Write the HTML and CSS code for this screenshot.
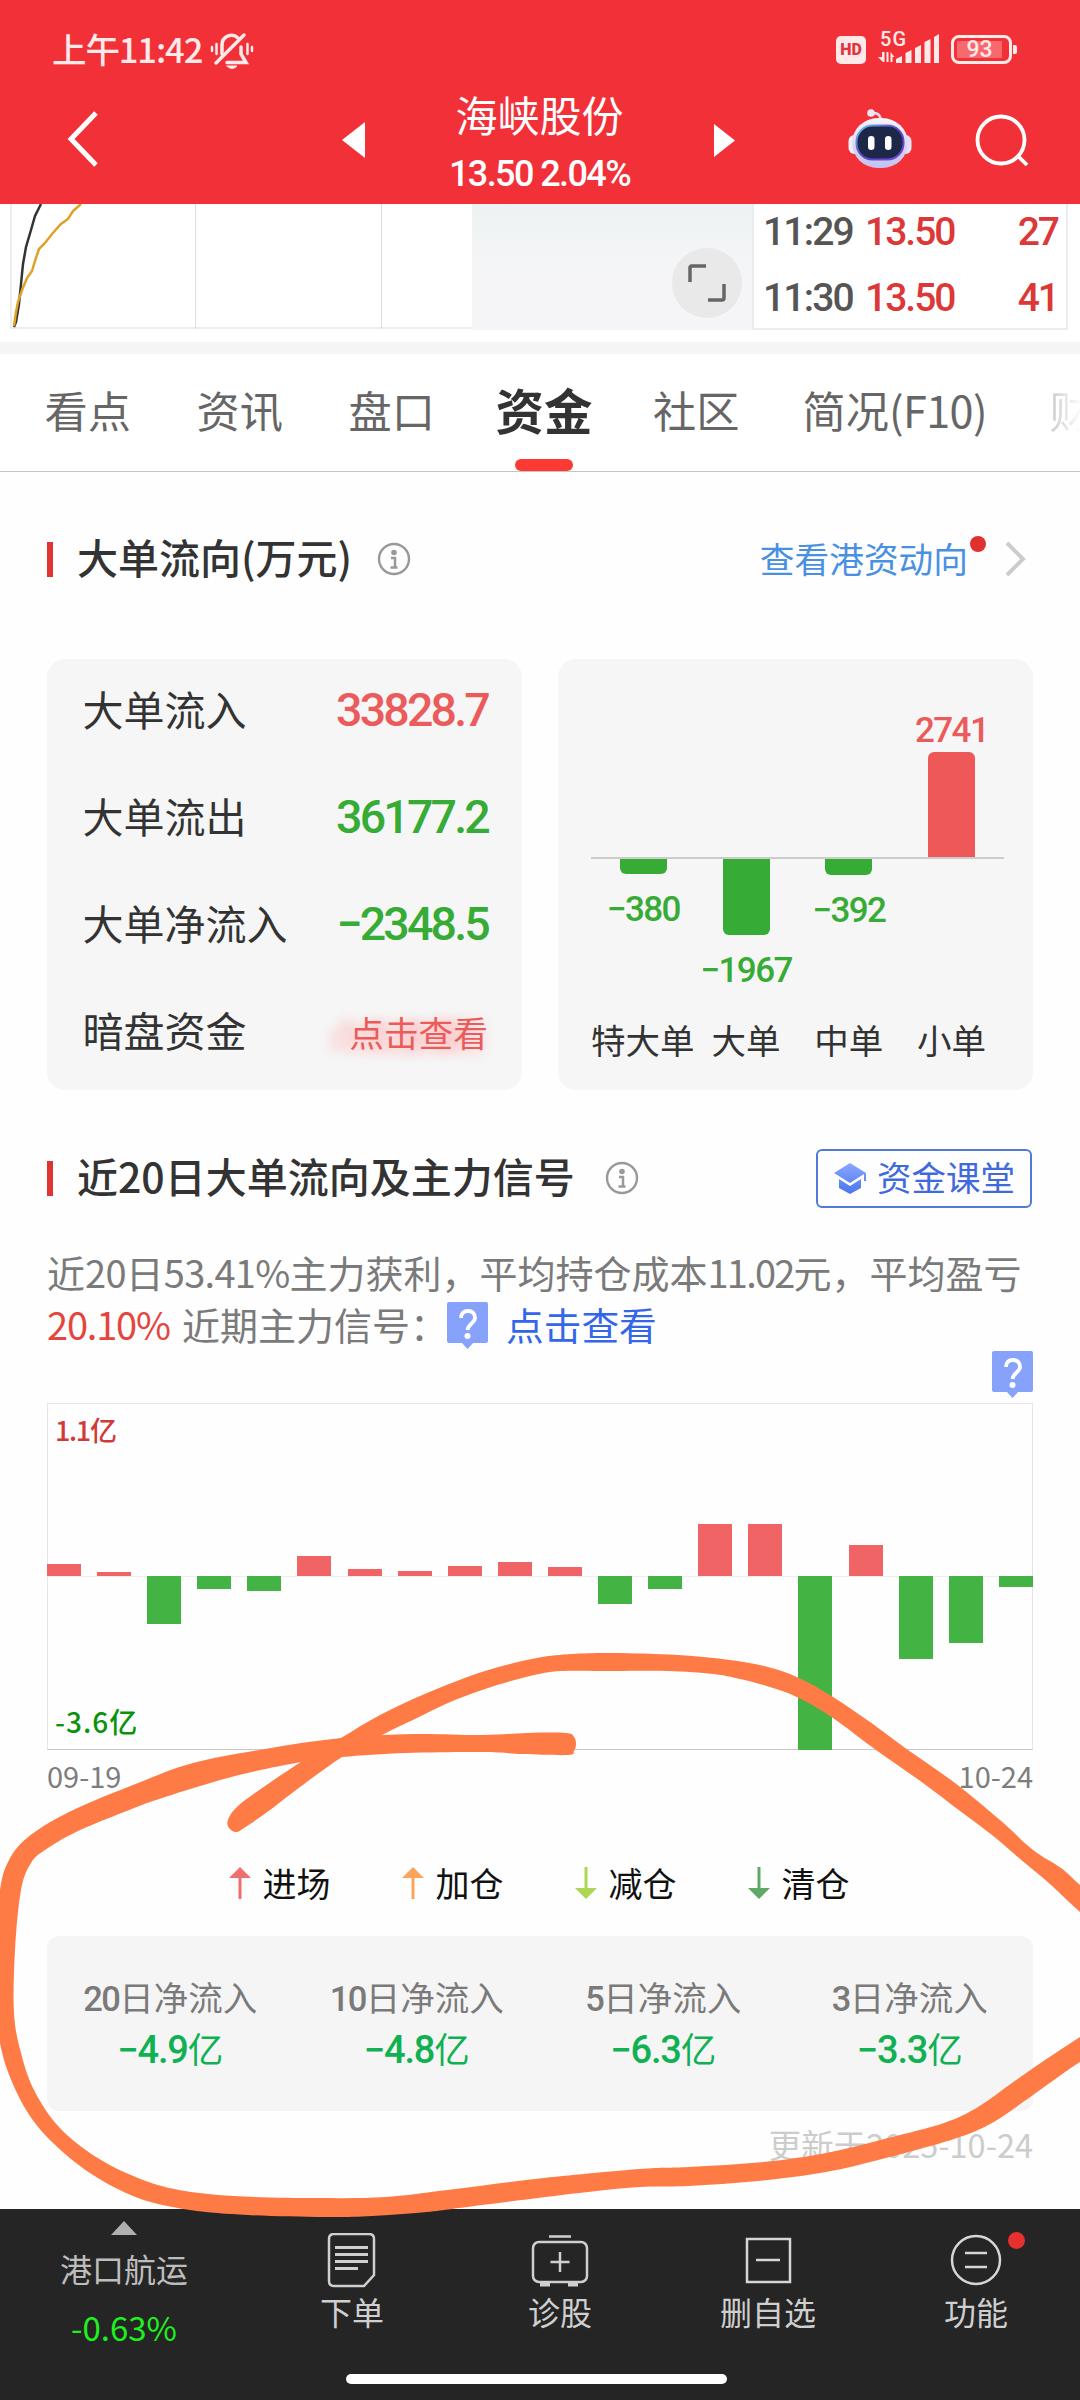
FILE: index.html
```html
<!DOCTYPE html>
<html lang="zh-CN">
<head>
    <meta charset="UTF-8">
    <meta name="viewport" content="width=device-width, initial-scale=1.0">
    <title>海峡股份 - 资金</title>
    <link rel="stylesheet" href="styles.css">
</head>
<body>
<div id="app">
    <header class="header">
        <div class="status">
            <span class="clock">上午11:42</span>
            <svg class="bell" width="44" height="38" viewBox="0 0 44 38" fill="none" stroke="#ffe9e9" stroke-width="3.500" stroke-linecap="round">
                <path d="M12 22V13a9.500 9.500 0 0 1 16-7M31 15v7l5 8.500H17"/>
                <path d="M34 3L6 31"/>
                <path d="M2 15v4M6.500 12v10M37.500 12v10M42 15v4" stroke-width="2.500"/>
                <path d="M17 34h10q-5 5-10 0z" fill="#ffe9e9" stroke-width="1"/>
            </svg>
            <span class="hd">HD</span>
            <svg class="signal" width="64" height="38" viewBox="0 0 64 38" fill="#ffe9e9">
                <text x="3" y="17.500" font-size="20" textLength="26">5G</text>
                <path d="M5 24h2.500v10H6l-5-5h4zM9.500 24h2v10h-2zM13.500 24l4 5h-2v5h-2z"/>
                <path d="M19 35v-4l6-3v7zM28.500 35V25l6-3v13zM38 35V20l6-3v18zM47.500 35V14l6-3v24zM57 35V9l5-3v29z"/>
            </svg>
            <span class="battery"><span class="level">93</span></span>
        </div>
        <div class="navbar">
            <svg class="back" width="34" height="60" viewBox="0 0 34 60" fill="none" stroke="#fff" stroke-width="5"><path d="M31 4L6 30l25 26"/></svg>
            <svg class="prev" width="23" height="36" viewBox="0 0 23 36"><path d="M23 0v36L0 18z" fill="#fff"/></svg>
            <div class="stock">
                <div class="stock-name">海峡股份</div>
                <div class="stock-price num">13.50 2.04%</div>
            </div>
            <svg class="next" width="21" height="33" viewBox="0 0 21 33"><path d="M0 0v33l21-16.500z" fill="#fff"/></svg>
            <svg class="robot" width="64" height="60" viewBox="0 0 64 60">
                <defs>
                    <linearGradient id="head" x1="0" y1="0" x2="0" y2="1"><stop offset="0" stop-color="#f7f4fb"/><stop offset="1" stop-color="#c3c0ee"/></linearGradient>
                    <linearGradient id="rim" x1="0" y1="0" x2="1" y2="1"><stop offset="0" stop-color="#67c8e8"/><stop offset=".5" stop-color="#5a42c8"/><stop offset="1" stop-color="#6d4be0"/></linearGradient>
                </defs>
                <path d="M24 4q8-1 9 7" fill="none" stroke="#f1dfe8" stroke-width="2.500"/>
                <circle cx="23" cy="4" r="3.800" fill="#eee6f5"/>
                <rect x="0.500" y="26" width="12" height="19" rx="6" fill="#f3eef8"/>
                <rect x="51.500" y="26" width="12" height="19" rx="6" fill="#e6e0f6"/>
                <rect x="4" y="9" width="56" height="50" rx="26" fill="url(#head)"/>
                <rect x="8.500" y="16.500" width="47" height="34" rx="16" fill="#1d2748" stroke="url(#rim)" stroke-width="2"/>
                <rect x="20" y="27" width="6.500" height="14" rx="3.200" fill="#fff"/>
                <rect x="37" y="27" width="6.500" height="14" rx="3.200" fill="#fff"/>
            </svg>
            <svg class="search" width="54" height="54" viewBox="0 0 54 54" fill="none" stroke="#fff" stroke-width="3.800"><circle cx="26" cy="26" r="23.500"/><path d="M42 41l10 10"/></svg>
        </div>
    </header>

    <section class="quote">
        <svg class="trend" width="472" height="137" viewBox="0 0 472 137" fill="none">
            <path d="M11 0v124" stroke="#ededed" stroke-width="2"/>
            <path d="M10 124H472" stroke="#ededed" stroke-width="2"/>
            <path d="M195.500 0v125M381.500 0v125" stroke="#dedede"/>
            <path d="M41 0l-6 12-4 14-5 17-3 17-2 20-2 20-3 18-2 5" stroke="#333" stroke-width="2.500"/>
            <path d="M81 0l-8 7-5 8-7 5-9 10-7 9-6 6-4 12-3 10-5 7-5 12-4 12-2 10-2 14" stroke="#dfa126" stroke-width="2.500"/>
        </svg>
        <div class="blur-panel">
            <div class="expand">
                <svg width="38" height="38" viewBox="0 0 38 38" fill="none" stroke="#666" stroke-width="3.500"><path d="M2 18V4q0-2 2-2h14M36 20v14q0 2-2 2H20"/></svg>
            </div>
        </div>
        <div class="ticks num">
            <div class="tick"><span class="t">11:29</span><span class="p">13.50</span><span class="v">27</span></div>
            <div class="tick"><span class="t">11:30</span><span class="p">13.50</span><span class="v">41</span></div>
        </div>
    </section>

    <nav class="tabs">
        <span class="tab">看点</span>
        <span class="tab">资讯</span>
        <span class="tab">盘口</span>
        <span class="tab active">资金</span>
        <span class="tab">社区</span>
        <span class="tab brief">简况<span class="latin">(F10)</span></span>
        <span class="tab faded">财</span>
    </nav>

    <main class="content">
        <div class="section-head first">
            <h2>大单流向(万元)</h2>
            <svg class="info" width="34" height="34" viewBox="0 0 34 34"><circle cx="17" cy="17" r="15" fill="none" stroke="#999" stroke-width="2.400"/><circle cx="17" cy="10.500" r="2.800" fill="#999"/><path d="M14 16h4v9M13.500 25.500h7" fill="none" stroke="#999" stroke-width="2.500"/></svg>
            <a class="more">查看港资动向<i class="dot"></i></a>
            <svg class="arrow" width="22" height="36" viewBox="0 0 22 36" fill="none" stroke="#ccc" stroke-width="4"><path d="M2 2l16 16L2 34"/></svg>
        </div>

        <div class="cards">
            <div class="card flow">
                <div class="row"><span>大单流入</span><b class="num red">33828.7</b></div>
                <div class="row"><span>大单流出</span><b class="num green">36177.2</b></div>
                <div class="row"><span>大单净流入</span><b class="num green">−2348.5</b></div>
                <div class="row"><span>暗盘资金</span><span class="peek">点击查看</span></div>
            </div>
            <div class="card orders">
                <div class="order-bars num">
                    <div class="col down"><i style="height:15px"></i><span>−380</span></div>
                    <div class="col down"><i style="height:76px"></i><span>−1967</span></div>
                    <div class="col down"><i style="height:16px"></i><span>−392</span></div>
                    <div class="col up"><span>2741</span><i style="height:107px"></i></div>
                </div>
                <div class="order-labels"><span>特大单</span><span>大单</span><span>中单</span><span>小单</span></div>
            </div>
        </div>

        <div class="section-head second">
            <h2>近20日大单流向及主力信号</h2>
            <svg class="info" width="34" height="34" viewBox="0 0 34 34"><circle cx="17" cy="17" r="15" fill="none" stroke="#999" stroke-width="2.400"/><circle cx="17" cy="10.500" r="2.800" fill="#999"/><path d="M14 16h4v9M13.500 25.500h7" fill="none" stroke="#999" stroke-width="2.500"/></svg>
            <a class="course">
                <svg width="33" height="31" viewBox="0 0 33 31"><defs><linearGradient id="cap" x1="0" y1="0" x2="0" y2="1"><stop offset="0" stop-color="#8aa8ff"/><stop offset="1" stop-color="#4a74ef"/></linearGradient></defs><path d="M16 0l16 10v8h-2v-7L16 20 0 10zM5 16l11 7 11-7v9l-11 6-11-6z" fill="url(#cap)"/></svg>
                <span>资金课堂</span>
            </a>
        </div>

        <div class="summary">
            <div class="line one">近<span class="digits">20</span>日<span class="digits">53.41%</span>主力获利，平均持仓成本<span class="digits ones">11.02</span>元，平均盈亏</div>
            <div class="line two"><span class="profit">20.10%</span><span class="near">近期主力信号：</span><svg class="ask" width="41" height="47" viewBox="0 0 41 47"><path d="M2 0h37q2 0 2 2v37q0 2-2 2H26l-5.500 6-5.500-6H2q-2 0-2-2V2q0-2 2-2z" fill="#86a2fb"/><path d="M14 16q0-7 7-7t7 7c0 5-7 6-7.500 12" fill="none" stroke="#fff" stroke-width="3.800"/><circle cx="20.500" cy="34" r="3" fill="#fff"/></svg><a>点击查看</a></div>
        </div>

        <div class="ask-row"><svg class="ask" width="41" height="47" viewBox="0 0 41 47"><path d="M2 0h37q2 0 2 2v37q0 2-2 2H26l-5.500 6-5.500-6H2q-2 0-2-2V2q0-2 2-2z" fill="#86a2fb"/><path d="M14 16q0-7 7-7t7 7c0 5-7 6-7.500 12" fill="none" stroke="#fff" stroke-width="3.800"/><circle cx="20.500" cy="34" r="3" fill="#fff"/></svg></div>

        <div class="history">
            <div class="scale max">1.1亿</div>
            <div class="bars" id="bars"></div>
            <div class="scale min">-3.6亿</div>
        </div>
        <div class="dates"><span>09-19</span><span>10-24</span></div>

        <div class="legend">
            <span><svg width="22" height="32" viewBox="0 0 22 32" fill="#ef6f6f"><path d="M11 0l11 11H12.500v21h-3V11H0z"/></svg>进场</span>
            <span><svg width="22" height="32" viewBox="0 0 22 32" fill="#faa55a"><path d="M11 0l11 11H12.500v21h-3V11H0z"/></svg>加仓</span>
            <span><svg width="22" height="32" viewBox="0 0 22 32" fill="#add656"><path d="M11 32l11-11H12.500V0h-3v21H0z"/></svg>减仓</span>
            <span><svg width="22" height="32" viewBox="0 0 22 32" fill="#5fa967"><path d="M11 32l11-11H12.500V0h-3v21H0z"/></svg>清仓</span>
        </div>

        <div class="totals">
            <div><p><b class="num">20</b>日净流入</p><strong><b class="num">−4.9</b>亿</strong></div>
            <div><p><b class="num">10</b>日净流入</p><strong><b class="num">−4.8</b>亿</strong></div>
            <div><p><b class="num">5</b>日净流入</p><strong><b class="num">−6.3</b>亿</strong></div>
            <div><p><b class="num">3</b>日净流入</p><strong><b class="num">−3.3</b>亿</strong></div>
        </div>
        <div class="updated">更新于2025-10-24</div>
    </main>

    <footer class="footer">
        <div class="sector">
            <svg width="26" height="14" viewBox="0 0 26 14"><path d="M13 0l13 14H0z" fill="#b0b0b0"/></svg>
            <span class="sector-name">港口航运</span>
            <span class="sector-change">-0.63%</span>
        </div>
        <div class="action">
            <svg width="60" height="56" viewBox="0 0 60 56" fill="none" stroke="#cfcfcf" stroke-width="2.500"><path d="M12 1h35q5 0 5 5v36L42 53H12q-5 0-5-5V6q0-5 5-5z"/><path d="M13 14.500h33M13 21.500h33M13 28.500h33M13 35.500h23" stroke-width="3"/></svg>
            <span>下单</span>
        </div>
        <div class="action">
            <svg width="60" height="56" viewBox="0 0 60 56" fill="none" stroke="#cfcfcf" stroke-width="2.500"><rect x="3" y="9" width="54" height="40" rx="6"/><path d="M19 3.500h22M30 19v20M20.500 29h19"/><path d="M10 51.500h10M38 51.500h10" stroke-width="4"/></svg>
            <span>诊股</span>
        </div>
        <div class="action">
            <svg width="60" height="56" viewBox="0 0 60 56" fill="none" stroke="#d6d6d6" stroke-width="2.500"><path d="M9 6h43v43H9zM18 27h24"/></svg>
            <span>删自选</span>
        </div>
        <div class="action">
            <svg width="60" height="56" viewBox="0 0 60 56" fill="none" stroke="#d6d6d6" stroke-width="2.500"><circle cx="30" cy="27" r="24"/><path d="M19 20h22M19 34h22"/></svg>
            <span>功能</span>
            <i class="dot"></i>
        </div>
        <div class="home"></div>
    </footer>

    <!-- freehand marker on top of the page -->
    <svg class="marker" width="1080" height="2400" viewBox="0 0 1080 2400" id="marker"></svg>
</div>
<script src="script.js"></script>
</body>
</html>
```

FILE: styles.css
```css
* {
    box-sizing: border-box;
}
body {
    margin: 0;
    background: #fefefe;
    font-family: "Noto Sans CJK SC", sans-serif;
    color: #333;
}
#app {
    position: relative;
    width: 1080px;
    height: 2400px;
    overflow: hidden;
    display: flex;
    flex-direction: column;
}
svg {
    display: block;
    flex: none;
}
.num {
    font-family: Roboto, "Noto Sans CJK SC", sans-serif;
    font-weight: 500;
}
.red {
    color: #ea5c5c;
}
.green {
    color: #36ab36;
}

/* header */
.header {
    height: 204px;
    background: #f23038;
    color: #fff;
}
.status {
    height: 80px;
    padding: 16px 68px 0 52px;
    display: flex;
    align-items: center;
    color: #ffe9e9;
}
.clock {
    font-size: 34.500px;
    font-weight: 500;
    line-height: 60px;
    letter-spacing: -1.1px;
    width: 158px;
    white-space: nowrap;
}
.bell {
    margin-top: 5px;
}
.hd {
    margin-left: auto;
    margin-right: 11px;
    width: 30px;
    height: 28px;
    border-radius: 5px;
    background: #ffe9e9;
    color: #e0353c;
    font: 900 16px/28px Roboto, sans-serif;
    text-align: center;
    margin-top: 3px;
}
.signal {
    font-family: Roboto, sans-serif;
    font-weight: 500;
    margin-bottom: 3px;
}
.battery {
    margin-left: 10px;
    width: 61px;
    height: 29px;
    margin-top: 3px;
    border: 3px solid #ffe9e9;
    border-radius: 8px;
    padding: 3px;
    position: relative;
}
.battery::after {
    content: "";
    position: absolute;
    left: 59px;
    top: 7px;
    width: 4px;
    height: 9px;
    border-radius: 0 2px 2px 0;
    background: #ffe9e9;
}
.level {
    display: block;
    width: 45px;
    height: 17px;
    background: #f7696e;
    font: 500 23px/18px Roboto, sans-serif;
    text-align: center;
    color: #ffe9e9;
}
.navbar {
    display: flex;
    height: 124px;
    padding: 0 51px 0 65px;
}
.back {
    margin-top: 29px;
}
.prev {
    margin: 42px 0 0 243px;
}
.stock {
    width: 350px;
    text-align: center;
}
.stock-name {
    font-size: 42px;
    line-height: 60px;
    margin-top: 4px;
}
.stock-price {
    font-size: 36px;
    line-height: 40px;
    margin-top: 10px;
    letter-spacing: -1.6px;
}
.next {
    margin-top: 44px;
}
.robot {
    margin: 29px 0 0 113px;
}
.search {
    margin: 34px 0 0 63px;
}

/* minute chart remainder and trade ticks */
.quote {
    display: flex;
    height: 138px;
    background: #fff;
}
.blur-panel {
    width: 280px;
    height: 126px;
    background: linear-gradient(#eef2f3, #f4f5f7 50%, #f6f4f7);
    padding: 44px 0 0 200px;
}
.expand {
    width: 70px;
    height: 70px;
    border-radius: 50%;
    background: #e9e9e9;
    display: flex;
    align-items: center;
    justify-content: center;
}
.ticks {
    width: 316px;
    height: 126px;
    border: 2px solid #ececec;
    border-top: 0;
    font-size: 39px;
    letter-spacing: -2px;
}
.tick {
    display: flex;
    height: 66px;
    line-height: 57px;
    padding: 0 8px 0 9px;
}
.t {
    width: 102px;
    color: #555;
    letter-spacing: -1.8px;
}
.p, .v {
    color: #dc3838;
}
.v {
    margin-left: auto;
}

/* tabs */
.tabs {
    display: flex;
    gap: 65.600px;
    height: 130px;
    padding: 25px 0 0 44.500px;
    border-top: 12px solid #f5f5f5;
    border-bottom: 1px solid #c4c4c4;
    background: #fff;
    font-size: 43.200px;
    line-height: 60px;
    color: #666;
    white-space: nowrap;
    overflow: hidden;
}
.tab.active {
    font-size: 48.500px;
    font-weight: 700;
    color: #333;
    margin: 0 -5px 0 -5px;
}
.tab.active::after {
    content: "";
    display: block;
    width: 58px;
    height: 12px;
    margin: 20px auto 0;
    border-radius: 6px;
    background: #fb3b33;
}
.brief {
    margin-left: -2.500px;
}
.latin {
    letter-spacing: -0.6px;
}
.tab.faded {
    color: transparent;
    margin-left: -3px;
    background: linear-gradient(90deg, #ccc, #fff 32px);
    -webkit-background-clip: text;
    background-clip: text;
}

/* sections */
.content {
    padding: 0 47px;
    flex: 1;
}
.section-head {
    display: flex;
    align-items: center;
    height: 60px;
}
.section-head::before {
    content: "";
    width: 6px;
    height: 35px;
    background: #e03434;
}
.section-head h2 {
    margin: -6px 0 0 24px;
    font-size: 41px;
    line-height: 60px;
    font-weight: 500;
    white-space: nowrap;
}
.first .info {
    margin-left: 25px;
}
.second .info {
    margin-left: 30px;
}
.first {
    margin-top: 57px;
}
.more {
    margin-left: auto;
    margin-right: 37px;
    margin-top: -3px;
    font-size: 34.700px;
    line-height: 50px;
    color: #4a90e2;
    position: relative;
}
.more .dot {
    position: absolute;
    right: -18px;
    top: 3px;
    width: 16px;
    height: 16px;
    border-radius: 50%;
    background: #e03030;
}
.first .arrow {
    margin-right: 6px;
}
.cards {
    display: grid;
    grid-template-columns: 475px 475px;
    gap: 36px;
    margin-top: 70px;
}
.card {
    height: 431px;
    border-radius: 18px;
    background: #f6f6f6;
}
.flow {
    padding: 0 34px 0 35.500px;
}
.row {
    display: flex;
    justify-content: space-between;
    height: 107px;
    line-height: 98px;
    font-size: 41px;
    white-space: nowrap;
}
.row b {
    font-size: 46.500px;
    line-height: 103px;
    letter-spacing: -2.8px;
}
.peek {
    font-size: 34.700px;
    line-height: 104px;
    color: #ea5c5c;
    text-shadow: -22px 2px 12px #ffb5b5, 0 3px 14px #ffc4c4;
}
.orders {
    padding: 54px 29px 0 33px;
}
.order-bars {
    display: flex;
    padding: 0 1px 0 1px;
    height: 288px;
    font-size: 35px;
    line-height: 36px;
    letter-spacing: -1.6px;
    background: linear-gradient(#ccc, #ccc) 0 144px / 100% 2px no-repeat;
}
.col {
    flex: 1;
    display: flex;
    flex-direction: column;
    align-items: center;
    color: #36ab36;
    white-space: nowrap;
}
.col i {
    width: 47px;
    background: #36ab36;
    border-radius: 0 0 6px 6px;
}
.down {
    padding-top: 146px;
}
.down span {
    margin-top: 18px;
}
.up {
    height: 144px;
    justify-content: flex-end;
    color: #ea5c5c;
}
.up span {
    margin-bottom: 3px;
}
.up i {
    background: #ee5858;
    border-radius: 6px 6px 0 0;
}
.order-labels {
    display: grid;
    grid-template-columns: repeat(4, 1fr);
    font-size: 34.500px;
    line-height: 50px;
    margin: 13px 1px 0 0;
    text-align: center;
    white-space: nowrap;
}
.second {
    margin-top: 58px;
}
.course {
    margin-left: auto;
    margin-right: 1px;
    width: 216px;
    height: 59px;
    border: 2px solid #5079d8;
    border-radius: 6px;
    display: flex;
    align-items: center;
    gap: 10px;
    padding-left: 16px;
    font-size: 34.500px;
    line-height: 50px;
    color: #3f69dc;
}
.course span {
    margin-top: -5px;
}
.summary {
    margin-top: 38px;
    font-size: 38px;
    color: #7a7a7a;
}
.line {
    display: flex;
    height: 52px;
    line-height: 51px;
    white-space: nowrap;
}
.digits {
    letter-spacing: -0.7px;
}
.ones {
    letter-spacing: -1.8px;
}
.profit {
    color: #e4453d;
    width: 135px;
    letter-spacing: -1.2px;
}
.near {
    width: 265px;
}
.summary a {
    margin-left: 18px;
    font-size: 37.700px;
    color: #3466ea;
}
.summary .ask {
    margin-top: 4px;
}
.ask-row {
    display: flex;
    justify-content: flex-end;
    margin-top: 1px;
}
.history {
    margin-top: 5px;
    height: 347px;
    border: 1px solid #e6e6e6;
    border-bottom-color: #c9c9c9;
    font-size: 27px;
    line-height: 36px;
    font-weight: 500;
    display: flex;
    flex-direction: column;
}
.scale {
    padding-left: 7px;
}
.max {
    color: #d23a38;
    margin-top: 8px;
    letter-spacing: -1.3px;
}
.min {
    color: #0a930a;
    margin-top: -47px;
    font-size: 28px;
    letter-spacing: 1px;
}
.bars {
    display: flex;
    justify-content: space-between;
    height: 302px;
    margin: 0 -1px;
    flex: none;
    padding-top: 128px;
    background: linear-gradient(#eee, #eee) 0 128px / 100% 1px no-repeat;
}
.bars i {
    width: 34px;
    background: #43b343;
}
.bars i.in {
    background: #f06466;
}
.dates {
    display: flex;
    justify-content: space-between;
    font-size: 29px;
    line-height: 40px;
    margin-top: 5px;
    color: #7d7d7d;
}
.legend {
    display: flex;
    justify-content: center;
    gap: 71px;
    margin-top: 63px;
    padding-right: 2px;
    font-size: 34px;
    line-height: 50px;
    color: #111;
}
.legend span {
    display: flex;
    align-items: center;
    gap: 12px;
}
.totals {
    display: grid;
    grid-template-columns: repeat(4, 1fr);
    height: 175px;
    margin-top: 28px;
    border-radius: 12px;
    background: #f5f5f5;
    text-align: center;
    white-space: nowrap;
}
.totals p {
    margin: 34px 0 0;
    font-size: 34.500px;
    line-height: 52px;
    color: #7a7a7a;
}
.totals p .num {
    letter-spacing: -1.7px;
}
.totals strong {
    display: block;
    font-size: 35.500px;
    line-height: 52px;
    margin-top: -3px;
    font-weight: 400;
    color: #10b153;
}
.totals strong .num {
    font-size: 38px;
    letter-spacing: -1.2px;
}
.updated {
    font-size: 32.500px;
    line-height: 44px;
    margin-top: 11px;
    text-align: right;
    color: #ccc;
}

/* bottom bar */
.footer {
    height: 191px;
    background: #252525;
    color: #cfcfcf;
    display: flex;
    font-size: 32px;
    position: relative;
}
.sector {
    width: 248px;
    display: flex;
    flex-direction: column;
    align-items: center;
    padding-top: 12px;
    color: #bdbdbd;
}
.sector-name {
    line-height: 44px;
    margin-top: 11px;
}
.sector-change {
    font-size: 33px;
    line-height: 44px;
    margin-top: 15px;
    color: #1ef01e;
}
.action {
    width: 208px;
    display: flex;
    flex-direction: column;
    align-items: center;
    padding-top: 24px;
    line-height: 44px;
    position: relative;
}
.action .dot {
    position: absolute;
    left: 136px;
    top: 23px;
    width: 17px;
    height: 17px;
    border-radius: 50%;
    background: #e93030;
}
.home {
    position: absolute;
    left: 346px;
    top: 165px;
    width: 381px;
    height: 10px;
    border-radius: 5px;
    background: #fff;
}
.marker {
    position: absolute;
    left: 0;
    top: 0;
    pointer-events: none;
    fill: #ff7b46;
}
```

FILE: script.js
```js
// daily net flow, in chart pixels above (+) or below (-) the zero line
var flows = [12, 4, -48, -13, -15, 20, 7, 5, 10, 14, 9, -28, -13, 52, 52, -174, 31, -83, -67, -11];
var bars = document.getElementById('bars');
flows.forEach(function (v) {
    var bar = document.createElement('i');
    bar.style.height = Math.abs(v) + 'px';
    if (v > 0) {
        bar.className = 'in';
        bar.style.marginTop = -v + 'px';
    }
    bars.appendChild(bar);
});

// outlines of the two marker strokes
var strokes = [
    [[236,1832],[229,1828],[228,1820],[238,1806],[268,1784],[301,1762],[341,1738],[380,1715],[427,1693],[485,1671],[537,1658],[572,1654],[613,1653],[678,1655],[730,1660],[768,1667],[799,1678],[833,1697],[870,1722],[908,1750],[955,1783],[1000,1820],[1033,1850],[1061,1868],[1080,1885],[1110,1910],[1110,1935],[1080,1912],[1050,1884],[1019,1858],[992,1835],[960,1811],[923,1783],[876,1750],[833,1718],[799,1698],[770,1687],[740,1679],[713,1674],[668,1671],[613,1671],[561,1671],[530,1676],[488,1688],[448,1703],[415,1719],[382,1735],[342,1757],[296,1790],[270,1810],[244,1828]],
    [[1110,2044],[1080,2062],[1061,2075],[1026,2100],[992,2123],[954,2139],[882,2159],[826,2172],[758,2181],[689,2186],[640,2187],[579,2193],[482,2205],[427,2212],[372,2216],[324,2217],[248,2215],[190,2210],[138,2198],[90,2173],[52,2142],[28,2113],[10,2077],[0,2043],[-5,2000],[-5,1940],[0,1890],[8,1862],[27,1838],[69,1812],[138,1783],[193,1763],[265,1749],[341,1738],[413,1734],[482,1735],[527,1733],[566,1733],[574,1737],[576,1744],[574,1751],[568,1755],[523,1754],[482,1752],[406,1753],[342,1757],[301,1762],[235,1776],[165,1797],[124,1812],[76,1832],[45,1850],[31,1863],[21,1890],[15,1950],[14,2013],[21,2053],[34,2090],[59,2127],[96,2157],[138,2178],[179,2190],[234,2196],[317,2198],[386,2197],[455,2189],[544,2178],[640,2169],[689,2167],[764,2162],[826,2153],[888,2138],[944,2123],[978,2107],[1012,2083],[1045,2060],[1080,2037],[1110,2018]]
];

function smooth(pts) {
    var n = pts.length;
    var d = 'M' + pts[0];
    for (var i = 0; i < n; i++) {
        var a = pts[(i + n - 1) % n], b = pts[i], c = pts[(i + 1) % n], e = pts[(i + 2) % n];
        d += 'C' + [b[0] + (c[0] - a[0]) / 6, b[1] + (c[1] - a[1]) / 6,
                    c[0] - (e[0] - b[0]) / 6, c[1] - (e[1] - b[1]) / 6, c[0], c[1]].join(' ');
    }
    return d + 'Z';
}

strokes.forEach(function (pts) {
    var path = document.createElementNS('http://www.w3.org/2000/svg', 'path');
    path.setAttribute('d', smooth(pts));
    document.getElementById('marker').appendChild(path);
});
```
